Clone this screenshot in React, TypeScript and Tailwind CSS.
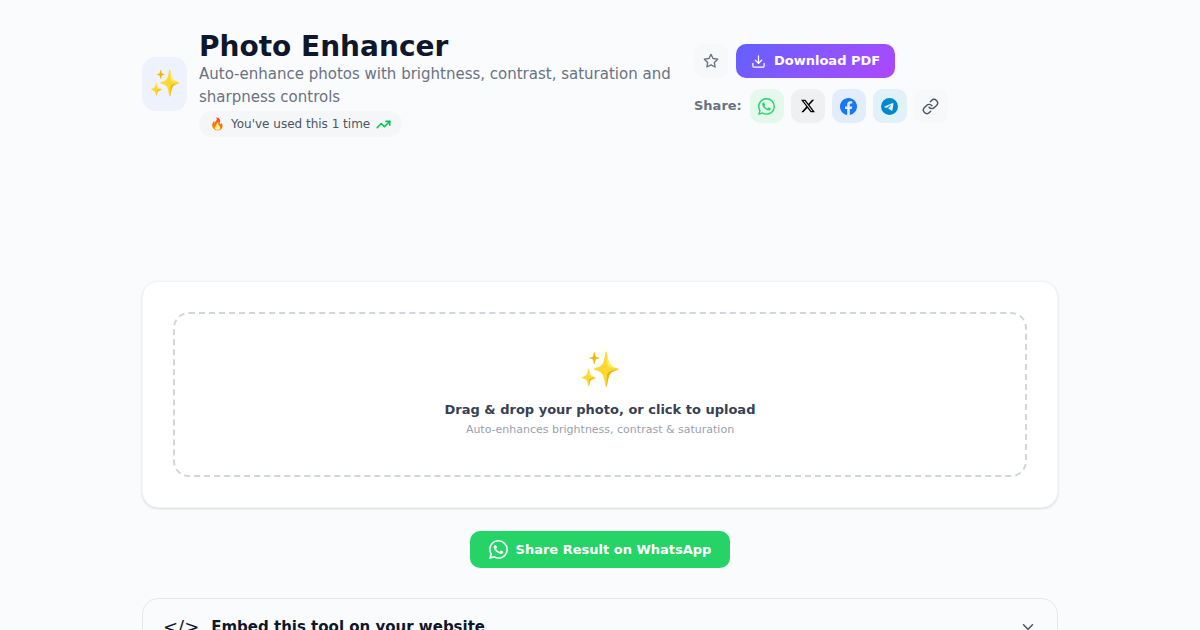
import type { ReactNode } from "react";
import {
  BsFacebook,
  BsTelegram,
  BsTwitterX,
  BsWhatsapp,
} from "react-icons/bs";
import { FiChevronDown, FiDownload, FiLink, FiStar } from "react-icons/fi";
import { TrendingUp } from "lucide-react";

type ShareTarget = {
  label: string;
  className: string;
  icon: ReactNode;
};

const shareTargets: ShareTarget[] = [
  {
    label: "Share on WhatsApp",
    className: "bg-[#e4f9ec] text-[#25d366]",
    icon: <BsWhatsapp size={17} />,
  },
  {
    label: "Share on X",
    className: "bg-[#eff0f2] text-black",
    icon: <BsTwitterX size={14} />,
  },
  {
    label: "Share on Facebook",
    className: "bg-[#e2ecfb] text-[#1877f2]",
    icon: <BsFacebook size={17} />,
  },
  {
    label: "Share on Telegram",
    className: "bg-[#e0f1f7] text-[#0088cc]",
    icon: <BsTelegram size={17} />,
  },
];

function ToolHeader() {
  return (
    <header className="flex items-center gap-4">
      <div className="flex w-[536px] items-center gap-3">
        <div className="flex h-[54px] w-[45px] shrink-0 items-center justify-center rounded-[14px] bg-[#edf2fd] text-[26px]">
          ✨
        </div>
        <div className="min-w-0">
          <h1 className="text-[28px] leading-[33px] font-extrabold text-[#0f172a]">
            Photo Enhancer
          </h1>
          <p className="text-[15px] leading-[23px] text-gray-500">
            Auto-enhance photos with brightness, contrast, saturation and
            sharpness controls
          </p>
          <p className="mt-0.5 flex w-fit items-center gap-1.5 rounded-full bg-[#f5f6f8] px-[11px] py-1 text-[12px] leading-[18px] text-gray-600">
            <span>🔥</span>
            You've used this 1 time
            <TrendingUp
              size={15}
              strokeWidth={2.5}
              className="text-green-500"
            />
          </p>
        </div>
      </div>
      <div className="flex flex-col gap-[11px]">
        <div className="flex gap-2">
          <button
            type="button"
            aria-label="Add to favourites"
            className="flex size-[34px] items-center justify-center rounded-[10px] bg-[#f7f8fa] text-gray-500"
          >
            <FiStar size={16} />
          </button>
          <button
            type="button"
            className="flex h-[34px] items-center gap-2 rounded-[10px] bg-linear-135 from-[#615fff] to-[#ad46ff] px-[15px] text-[13px] font-bold text-white"
          >
            <FiDownload size={15} />
            Download PDF
          </button>
        </div>
        <div className="flex items-center gap-2">
          <span className="text-[13px] font-semibold text-gray-500">
            Share:
          </span>
          <div className="flex gap-[7px]">
            {shareTargets.map((target) => (
              <a
                key={target.label}
                href="#"
                aria-label={target.label}
                className={`flex size-[34px] items-center justify-center rounded-[10px] ${target.className}`}
              >
                {target.icon}
              </a>
            ))}
            <button
              type="button"
              aria-label="Copy link"
              className="flex size-[34px] items-center justify-center rounded-[10px] bg-[#f7f8fa] text-gray-600"
            >
              <FiLink size={17} />
            </button>
          </div>
        </div>
      </div>
    </header>
  );
}

function UploadCard() {
  return (
    <section className="mt-36 rounded-2xl border border-gray-100 bg-white p-[30px] shadow-sm">
      <label className="flex cursor-pointer flex-col items-center rounded-2xl border-2 border-dashed border-gray-300 py-9 text-center">
        <input type="file" accept="image/*" className="sr-only" />
        <span className="text-[34px] leading-[39px]">✨</span>
        <span className="mt-2.5 text-[13px] leading-[22px] font-bold text-gray-700">
          Drag &amp; drop your photo, or click to upload
        </span>
        <span className="text-[11px] leading-[18px] text-gray-400">
          Auto-enhances brightness, contrast &amp; saturation
        </span>
      </label>
    </section>
  );
}

export default function App() {
  return (
    <div className="h-screen overflow-hidden bg-[#f9fbfd] font-['DejaVu_Sans',sans-serif]">
      <main className="mx-auto max-w-[916px] pt-[30px]">
        <ToolHeader />
        <UploadCard />
        <div className="mt-[23px] flex justify-center">
          <a
            href="#"
            className="flex h-[37px] items-center gap-2 rounded-[10px] bg-[#25d366] px-[19px] text-[13px] font-bold text-white"
          >
            <BsWhatsapp size={19} />
            Share Result on WhatsApp
          </a>
        </div>
        <section className="mt-[30px] rounded-2xl border border-gray-200">
          <button
            type="button"
            aria-expanded={false}
            className="flex w-full items-center gap-3 px-5 py-3.5 text-[15px] font-bold text-[#0f172a]"
          >
            <span className="text-lg font-normal">&lt;/&gt;</span>
            Embed this tool on your website
            <FiChevronDown size={18} className="ml-auto text-gray-600" />
          </button>
        </section>
      </main>
    </div>
  );
}
